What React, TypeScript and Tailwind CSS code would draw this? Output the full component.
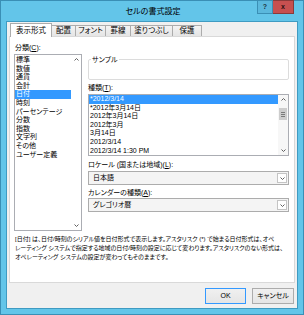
const categories = [
  "標準",
  "数値",
  "通貨",
  "会計",
  "日付",
  "時刻",
  "パーセンテージ",
  "分数",
  "指数",
  "文字列",
  "その他",
  "ユーザー定義",
];

const dateTypes = [
  "*2012/3/14",
  "*2012年3月14日",
  "2012年3月14日",
  "2012年3月",
  "3月14日",
  "2012/3/14",
  "2012/3/14 1:30 PM",
];

const tabs = [
  { label: "表示形式", w: "w-[42px]" },
  { label: "配置", w: "w-[24px]" },
  { label: "フォント", w: "w-[30px]" },
  { label: "罫線", w: "w-[25px]" },
  { label: "塗りつぶし", w: "w-[42px]" },
  { label: "保護", w: "w-[29px]" },
];

function Chevron({ down = false }: { down?: boolean }) {
  return (
    <svg width="5" height="3" viewBox="0 0 5 3" className="block">
      <polyline
        points={down ? "0.5,0.5 2.5,2.5 4.5,0.5" : "0.5,2.5 2.5,0.5 4.5,2.5"}
        fill="none"
        stroke="#606060"
        strokeWidth="1"
      />
    </svg>
  );
}

function Dropdown({ value }: { value: string }) {
  return (
    <div className="h-[14px] flex border border-[#acacac] bg-[#f4f4f4]">
      <div className="flex-1 pl-[4px] text-[7px] leading-[12px]">{value}</div>
      <div className="w-[10px] my-[1px] mr-[1px] border border-[#c4c4c4] bg-white flex items-center justify-center">
        <Chevron down />
      </div>
    </div>
  );
}

function Mnemonic({ text, key1, rest }: { text: string; key1: string; rest: string }) {
  return (
    <span>
      {text}(<span className="underline">{key1}</span>){rest}
    </span>
  );
}

export default function App() {
  return (
    <div className="w-[304px] h-[315px] bg-[#63c5e9] border border-[#3a8fb5] flex flex-col text-black font-['Liberation_Sans','Noto_Sans_CJK_JP',sans-serif] [font-feature-settings:'palt']">
      {/* title bar */}
      <div className="h-[21px] relative flex items-center justify-center">
        <span className="text-[8px] leading-[10px] pl-[2px]">セルの書式設定</span>
        <div className="absolute top-[-1px] right-[9px] flex">
          <div className="w-[16px] h-[14px] bg-[#5bb8dd] border border-[#3a8fb5] flex items-center justify-center text-[7px] font-bold text-[#1d3340]">
            ?
          </div>
          <div className="w-[21px] h-[14px] bg-[#c75050] border border-[#8a3a3a] border-l-0 flex items-center justify-center text-[7px] font-bold text-[#2a1010]">
            x
          </div>
        </div>
      </div>

      {/* client area */}
      <div className="flex-1 mx-[6px] mb-[6px] bg-[#f0f0f0] shadow-[0_0_0_1px_#3f9bc2] flex flex-col">
        {/* tabs */}
        <div className="h-[14px] pt-[1px] flex items-end ml-[3px]">
          {tabs.map((t, i) =>
            i === 0 ? (
              <div
                key={t.label}
                className={`${t.w} h-[14px] -mb-px relative z-10 bg-white border border-[#acacac] border-b-0 flex items-center justify-center text-[7.5px]`}
              >
                {t.label}
              </div>
            ) : (
              <div
                key={t.label}
                className={`${t.w} h-[11px] bg-gradient-to-b from-[#f3f3f3] to-[#e5e5e5] border border-[#acacac] border-l-0 border-b-0 flex items-center justify-center text-[7.5px]`}
              >
                {t.label}
              </div>
            )
          )}
        </div>

        {/* panel */}
        <div className="h-[247px] mx-[2px] bg-white border border-[#d9d9d9] pl-[4px] pr-[5px] pt-[6px] flex flex-col">
          <div className="flex gap-[6px]">
            {/* category column */}
            <div className="w-[68px] flex flex-col">
              <div className="h-[9px] leading-[9px] text-[7px] pl-[1px]">
                <Mnemonic text="分類" key1="C" rest=":" />
              </div>
              <div className="mt-[2px] h-[177px] border border-[#abadb3] flex">
                <div className="flex-1 pt-[1px]">
                  {categories.map((c) => (
                    <div
                      key={c}
                      className={`h-[8.6px] leading-[8.6px] text-[7px] pl-[1px] whitespace-nowrap ${
                        c === "日付" ? "bg-[#3399ff] text-white" : ""
                      }`}
                    >
                      {c}
                    </div>
                  ))}
                </div>
                <div className="w-[10px] flex flex-col justify-between items-center py-[3px]">
                  <Chevron />
                  <Chevron down />
                </div>
              </div>
            </div>

            {/* right column */}
            <div className="flex-1 flex flex-col">
              <fieldset className="mt-[12px] h-[25px] border border-[#dcdcdc] rounded-[2px]">
                <legend className="ml-[2px] px-[1px] text-[7px] leading-[9px]">サンプル</legend>
              </fieldset>

              <div className="mt-[3px] h-[9px] leading-[9px] text-[7px]">
                <Mnemonic text="種類" key1="T" rest=":" />
              </div>
              <div className="mt-[2px] h-[62px] border border-[#abadb3] flex">
                <div className="flex-1">
                  {dateTypes.map((d, i) => (
                    <div
                      key={d}
                      className={`h-[8.6px] leading-[8.6px] text-[7px] pl-[1px] whitespace-nowrap ${
                        i === 0 ? "bg-[#3399ff] text-white" : ""
                      }`}
                    >
                      {d}
                    </div>
                  ))}
                </div>
                <div className="w-[10px] flex flex-col items-center bg-[#f7f7f7]">
                  <div className="h-[9px] flex items-center">
                    <Chevron />
                  </div>
                  <div className="mt-[4px] w-[8px] h-[12px] bg-[#cdcdcd] flex flex-col items-center justify-center gap-[1px]">
                    <div className="w-[4px] h-px bg-[#7a7a7a]" />
                    <div className="w-[4px] h-px bg-[#7a7a7a]" />
                    <div className="w-[4px] h-px bg-[#7a7a7a]" />
                  </div>
                  <div className="flex-1" />
                  <div className="h-[9px] flex items-center">
                    <Chevron down />
                  </div>
                </div>
              </div>

              <div className="mt-[4px] h-[9px] leading-[9px] text-[7px]">
                <Mnemonic text="ロケール (国または地域)" key1="L" rest=":" />
              </div>
              <div className="mt-[2px]">
                <Dropdown value="日本語" />
              </div>

              <div className="mt-[3px] h-[9px] leading-[9px] text-[7px]">
                <Mnemonic text="カレンダーの種類" key1="A" rest=":" />
              </div>
              <div className="mt-[1px]">
                <Dropdown value="グレゴリオ暦" />
              </div>
            </div>
          </div>

          <div className="mt-[3.5px] pl-[1px] text-[6px] leading-[9px] whitespace-nowrap">
            <div>[日付] は、日付/時刻のシリアル値を日付形式で表示します。アスタリスク (*) で始まる日付形式は、オペ</div>
            <div>レーティング システムで指定する地域の日付/時刻の設定に応じて変わります。アスタリスクのない形式は、</div>
            <div>オペレーティング システムの設定が変わってもそのままです。</div>
          </div>
        </div>

        {/* buttons */}
        <div className="flex-1 flex justify-end items-start pt-[5px] pr-[3px] gap-[6px]">
          <button className="w-[41px] h-[16px] bg-gradient-to-b from-[#f0f0f0] to-[#e5e5e5] border border-[#3399ff] text-[7px] leading-[14px]">
            OK
          </button>
          <button className="w-[42px] h-[16px] bg-gradient-to-b from-[#f0f0f0] to-[#e5e5e5] border border-[#acacac] text-[7px] leading-[14px]">
            キャンセル
          </button>
        </div>
      </div>
    </div>
  );
}
